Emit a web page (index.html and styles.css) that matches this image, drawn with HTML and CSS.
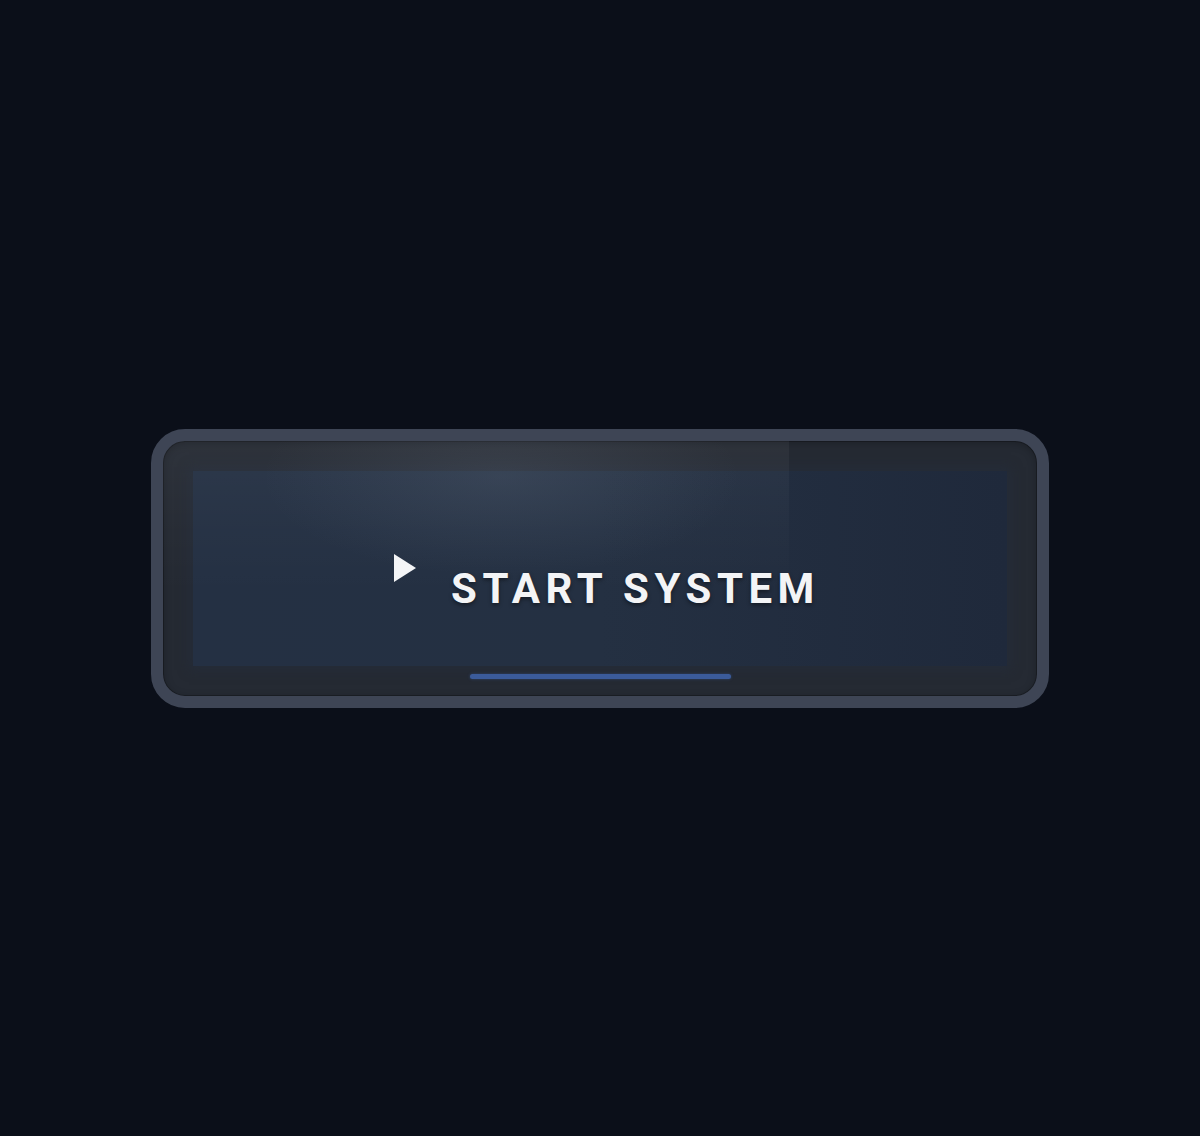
FILE: index.html
```html
<!DOCTYPE html>
<html lang="en">
<head>
<meta charset="utf-8">
<title>Start System</title>
<link rel="stylesheet" href="styles.css">
</head>
<body>
<main class="stage">
  <button class="start-btn" type="button">
    <span class="shine"></span>
    <span class="panel">
      <svg class="play-icon" width="22" height="28" viewBox="0 0 22 28" aria-hidden="true">
        <polygon points="0,0 22,14 0,28" fill="#f4f5f7"/>
      </svg>
      <span class="label">START SYSTEM</span>
    </span>
    <span class="progress"></span>
  </button>
</main>
</body>
</html>
```

FILE: styles.css
```css
html, body {
  margin: 0;
  padding: 0;
}

body {
  background: #0b0f19;
  font-family: Roboto, "Noto Sans", "Liberation Sans", sans-serif;
}

.stage {
  height: 1136px;
  display: flex;
  align-items: center;
  justify-content: center;
}

.start-btn {
  position: relative;
  box-sizing: border-box;
  width: 898px;
  height: 279px;
  padding: 30px;
  border: 12px solid #3e4555;
  border-radius: 34px;
  background: #252a33;
  overflow: hidden;
  cursor: pointer;
  box-shadow: inset 0 0 0 1px rgba(0, 0, 0, 0.25), inset 0 2px 8px rgba(0, 0, 0, 0.25);
  font: inherit;
  color: inherit;
  display: flex;
}

.shine {
  position: absolute;
  top: 0;
  left: 0;
  width: 626px;
  height: 100%;
  background:
    radial-gradient(ellipse 240px 100px at 54% 14%, rgba(148, 163, 184, 0.12), rgba(148, 163, 184, 0) 100%),
    linear-gradient(180deg, rgba(255, 255, 255, 0.045), rgba(255, 255, 255, 0.015) 35%, rgba(255, 255, 255, 0) 60%);
  pointer-events: none;
  z-index: 2;
}

.panel {
  position: relative;
  z-index: 1;
  flex: 1;
  display: flex;
  align-items: center;
  justify-content: center;
  gap: 35px;
  padding-left: 14px;
  background: linear-gradient(90deg, #243043 0%, #243042 50%, #1f293b 100%);
  box-shadow: 0 0 10px 4px rgba(35, 45, 62, 0.5);
}

.play-icon {
  display: block;
}

.label {
  margin-top: 42px;
  font-size: 42px;
  font-weight: 700;
  letter-spacing: 5.5px;
  color: #f3f4f6;
  line-height: 1;
  text-shadow: 0 2px 4px rgba(0, 0, 0, 0.45);
}

.progress {
  position: absolute;
  left: 307px;
  bottom: 17px;
  width: 261px;
  height: 5px;
  border-radius: 3px;
  background: #3b5b9a;
  box-shadow: 0 0 3px rgba(59, 91, 154, 0.6);
  z-index: 3;
}
```
